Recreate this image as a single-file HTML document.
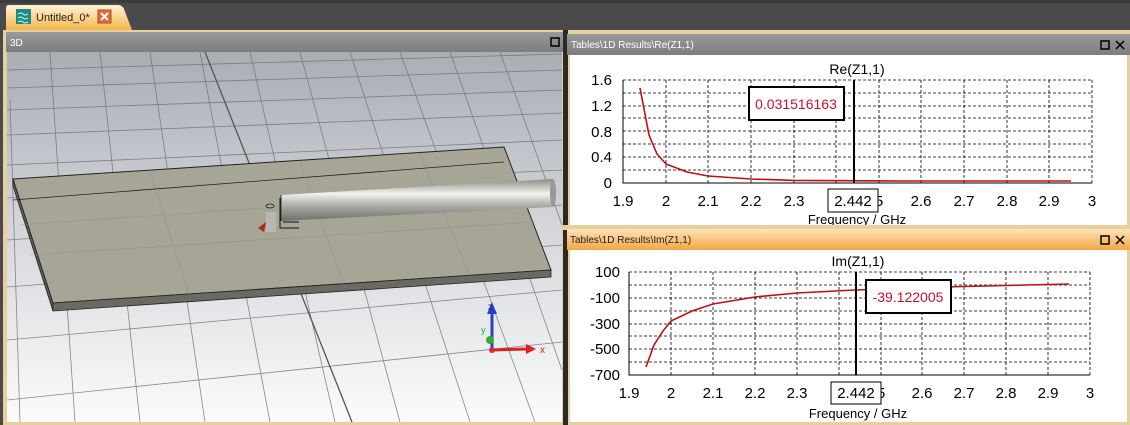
<!DOCTYPE html>
<html><head><meta charset="utf-8"><style>
body{margin:0;width:1130px;height:425px;overflow:hidden;background:#4a4a4a;font-family:"Liberation Sans",sans-serif}
svg{display:block}
</style></head><body>
<svg width="1130" height="425" xmlns="http://www.w3.org/2000/svg" font-family="Liberation Sans, sans-serif">
<defs>
<linearGradient id="tab" x1="0" y1="0" x2="0" y2="1"><stop offset="0" stop-color="#fff3d6"/><stop offset="1" stop-color="#f5b64a"/></linearGradient>
<linearGradient id="vp" x1="0" y1="0" x2="0" y2="1"><stop offset="0" stop-color="#a9adb4"/><stop offset="0.5" stop-color="#d6d8dc"/><stop offset="1" stop-color="#fbfbfb"/></linearGradient>
<linearGradient id="hdr" x1="0" y1="0" x2="0" y2="1"><stop offset="0" stop-color="#999"/><stop offset="1" stop-color="#7d7d7d"/></linearGradient>
<linearGradient id="hdro" x1="0" y1="0" x2="0" y2="1"><stop offset="0" stop-color="#fde3b6"/><stop offset="1" stop-color="#f3a646"/></linearGradient>
<linearGradient id="cyl" x1="0" y1="0" x2="0" y2="1"><stop offset="0" stop-color="#8c8c86"/><stop offset="0.35" stop-color="#f2f2ee"/><stop offset="0.6" stop-color="#b4b4ae"/><stop offset="1" stop-color="#6e6e68"/></linearGradient>
</defs>
<rect width="1130" height="425" fill="#4a4a4a"/>
<rect x="0" y="0" width="1130" height="3" fill="#3a3a3a"/>
<path d="M6 30 L6 8 Q6 5 9 5 L118 5 Q122 5 124 9 L132 30 Z" fill="url(#tab)"/>
<rect x="16" y="9" width="15" height="15" fill="#1e8a80"/>
<path d="M18 14 q3 -2 5 0 t5 0 M18 18 q3 -2 5 0 t5 0 M18 22 q3 -2 5 0 t5 0" stroke="#cfe" fill="none" stroke-width="1"/>
<text x="36" y="21" font-size="11" fill="#222">Untitled_0*</text>
<rect x="98" y="10" width="13" height="13" fill="#e26a3c" stroke="#b84a20"/>
<path d="M101 13 L108 20 M108 13 L101 20" stroke="#fff" stroke-width="2"/>
<rect x="3" y="30" width="1127" height="395" fill="#e8cfa0"/>
<rect x="6" y="32" width="557" height="20" fill="url(#hdr)"/>
<text x="10" y="46" font-size="10" fill="#fff">3D</text>
<rect x="551" y="38" width="8" height="8" fill="none" stroke="#000" stroke-width="1.5"/>
<rect x="7" y="52" width="555" height="370" fill="url(#vp)"/>
<g stroke="#6a6e74" stroke-width="0.8" fill="none" opacity="0.8">
<path d="M7 70 L562 54"/><path d="M7 88 L562 70"/><path d="M7 110 L562 90"/><path d="M7 135 L562 113"/><path d="M7 165 L562 140"/><path d="M7 198 L562 170"/><path d="M7 240 L562 205"/><path d="M7 287 L562 245"/><path d="M7 340 L562 290"/><path d="M7 400 L562 342"/>
<path d="M50 52 L75 422"/><path d="M100 52 L140 422"/><path d="M150 52 L205 422"/><path d="M200 52 L270 422"/><path d="M250 52 L335 422"/><path d="M300 52 L400 422"/><path d="M350 52 L470 422"/><path d="M400 52 L535 422"/><path d="M450 52 L562 370"/><path d="M500 52 L562 225"/><path d="M10 100 L20 422"/>
</g>
<path d="M205 52 L352 422" stroke="#555" stroke-width="1.3"/>
<path d="M13 179 L504 147 L551 270 L53 303 Z" fill="#a6a596" stroke="#222" stroke-width="1"/>
<path d="M13 179 L53 303 L53 311 L13 186 Z" fill="#5e5d55" stroke="#222" stroke-width="0.8"/>
<path d="M53 303 L551 270 L551 277 L53 311 Z" fill="#6b6a62" stroke="#222" stroke-width="0.8"/>
<path d="M13 200 L504 162" stroke="#222" stroke-width="0.8"/>
<g stroke="#8a8a80" stroke-width="0.6" opacity="0.7"><path d="M20 225 L520 190"/><path d="M30 255 L535 222"/><path d="M150 172 L190 297"/><path d="M300 162 L345 288"/><path d="M420 154 L470 276"/></g>
<path d="M281 195 L553 179 L553 207 L281 221 Z" fill="url(#cyl)"/>
<ellipse cx="553" cy="193" rx="3" ry="14" fill="#999"/>
<path d="M281 195 L281 221" stroke="#333"/>
<rect x="266" y="212" width="10" height="20" fill="#bbb" opacity="0.8"/>
<ellipse cx="270" cy="206" rx="4" ry="2" fill="none" stroke="#222" stroke-width="0.8"/>
<path d="M280 198 L280 228 L299 228 M283 222 L299 222" stroke="#111" fill="none" stroke-width="1"/>
<path d="M258 228 L266 222 L264 232 Z" fill="#b22"/>
<path d="M492 350 L492 310" stroke="#2a3fc8" stroke-width="3"/><path d="M487 314 L492 302 L497 314 Z" fill="#2a3fc8"/>
<text x="488" y="310" font-size="10" fill="#2233aa" font-weight="bold">z</text>
<path d="M492 350 L528 349" stroke="#d22" stroke-width="3"/><path d="M526 344 L536 349 L526 354 Z" fill="#d22"/>
<text x="540" y="353" font-size="10" fill="#c22">x</text>
<circle cx="490" cy="340" r="4" fill="#3a3"/><text x="481" y="333" font-size="9" fill="#2a2">y</text>
<circle cx="492" cy="350" r="3" fill="#c33"/>
<rect x="563" y="30" width="5" height="395" fill="#2a2a2a"/>
<rect x="567" y="34" width="563" height="21" fill="url(#hdr)"/>
<text x="571" y="48" font-size="10" fill="#fff">Tables\1D Results\Re(Z1,1)</text>
<rect x="1101" y="41" width="8" height="8" fill="none" stroke="#000" stroke-width="1.5"/>
<path d="M1116 41 L1124 49 M1124 41 L1116 49" stroke="#000" stroke-width="1.5"/>
<rect x="570" y="55" width="557" height="170" fill="#fff"/>
<g stroke="#000" stroke-width="0.8" stroke-dasharray="3,2">
<path d="M623 170 H1092 M623 157 H1092 M623 144 H1092 M623 131 H1092 M623 118 H1092 M623 106 H1092 M623 93 H1092 M623 80 H1092"/>
<path d="M666 80 V183 M708 80 V183 M751 80 V183 M794 80 V183 M836 80 V183 M879 80 V183 M921 80 V183 M964 80 V183 M1007 80 V183 M1049 80 V183 M1092 80 V183"/>
</g>
<path d="M623 80 V183 H1092" stroke="#000" fill="none" stroke-width="1"/>
<g font-size="15" text-anchor="end">
<text x="612" y="85">1.6</text><text x="612" y="111">1.2</text><text x="612" y="137">0.8</text><text x="612" y="162">0.4</text><text x="612" y="188">0</text>
</g>
<g font-size="15" text-anchor="middle">
<text x="623" y="206">1.9</text><text x="666" y="206">2</text><text x="708" y="206">2.1</text><text x="751" y="206">2.2</text><text x="794" y="206">2.3</text><text x="836" y="206">2</text><text x="879" y="206">5</text><text x="921" y="206">2.6</text><text x="964" y="206">2.7</text><text x="1007" y="206">2.8</text><text x="1049" y="206">2.9</text><text x="1092" y="206">3</text>
</g>
<text x="857" y="224" font-size="13" text-anchor="middle">Frequency / GHz</text>
<text x="857" y="74" font-size="14" text-anchor="middle">Re(Z1,1)</text>
<path d="M640 88 L649 135 L657 154 L666 164 L687 172 L708 176 L751 179 L794 180.4 L900 181 L1071 181" stroke="#c01010" stroke-width="1.6" fill="none"/>
<path d="M854 80 V183" stroke="#000" stroke-width="2"/>
<rect x="749" y="87" width="95" height="33" fill="#fff" stroke="#000" stroke-width="2"/>
<text x="796" y="109" font-size="14" fill="#d0102a" text-anchor="middle">0.031516163</text>
<rect x="828" y="189" width="50" height="23" fill="#fff" stroke="#000"/>
<text x="853" y="206" font-size="15" text-anchor="middle">2.442</text>
<rect x="563" y="225" width="567" height="5" fill="#e8cfa0"/>
<rect x="567" y="229" width="563" height="21" fill="url(#hdro)"/>
<text x="570" y="243" font-size="10" fill="#222">Tables\1D Results\Im(Z1,1)</text>
<rect x="1101" y="236" width="8" height="8" fill="none" stroke="#000" stroke-width="1.5"/>
<path d="M1116 236 L1124 244 M1124 236 L1116 244" stroke="#000" stroke-width="1.5"/>
<rect x="570" y="250" width="557" height="172" fill="#fff"/>
<g stroke="#000" stroke-width="0.8" stroke-dasharray="3,2">
<path d="M629 285 H1090 M629 298 H1090 M629 311 H1090 M629 324 H1090 M629 336 H1090 M629 349 H1090 M629 362 H1090 M629 272 H1090"/>
<path d="M671 272 V375 M713 272 V375 M755 272 V375 M797 272 V375 M839 272 V375 M881 272 V375 M922 272 V375 M964 272 V375 M1006 272 V375 M1048 272 V375 M1090 272 V375"/>
</g>
<path d="M629 272 V375 H1090" stroke="#000" fill="none" stroke-width="1"/>
<g font-size="15" text-anchor="end">
<text x="620" y="277">100</text><text x="620" y="303">-100</text><text x="620" y="329">-300</text><text x="620" y="354">-500</text><text x="620" y="380">-700</text>
</g>
<g font-size="15" text-anchor="middle">
<text x="629" y="398">1.9</text><text x="671" y="398">2</text><text x="713" y="398">2.1</text><text x="755" y="398">2.2</text><text x="797" y="398">2.3</text><text x="839" y="398">2</text><text x="881" y="398">5</text><text x="922" y="398">2.6</text><text x="964" y="398">2.7</text><text x="1006" y="398">2.8</text><text x="1048" y="398">2.9</text><text x="1090" y="398">3</text>
</g>
<text x="858" y="418" font-size="13" text-anchor="middle">Frequency / GHz</text>
<text x="858" y="266" font-size="14" text-anchor="middle">Im(Z1,1)</text>
<path d="M646 367 L654 345 L663 331 L671 321 L692 311 L713 304 L755 297 L797 293 L855 290 L922 287.5 L1006 285.5 L1069 284" stroke="#c01010" stroke-width="1.6" fill="none"/>
<path d="M856 272 V375" stroke="#000" stroke-width="2"/>
<rect x="866" y="280" width="85" height="33" fill="#fff" stroke="#000" stroke-width="2"/>
<text x="908" y="302" font-size="14" fill="#d0102a" text-anchor="middle">-39.122005</text>
<rect x="831" y="382" width="50" height="22" fill="#fff" stroke="#000"/>
<text x="856" y="398" font-size="15" text-anchor="middle">2.442</text>
</svg>
</body></html>
